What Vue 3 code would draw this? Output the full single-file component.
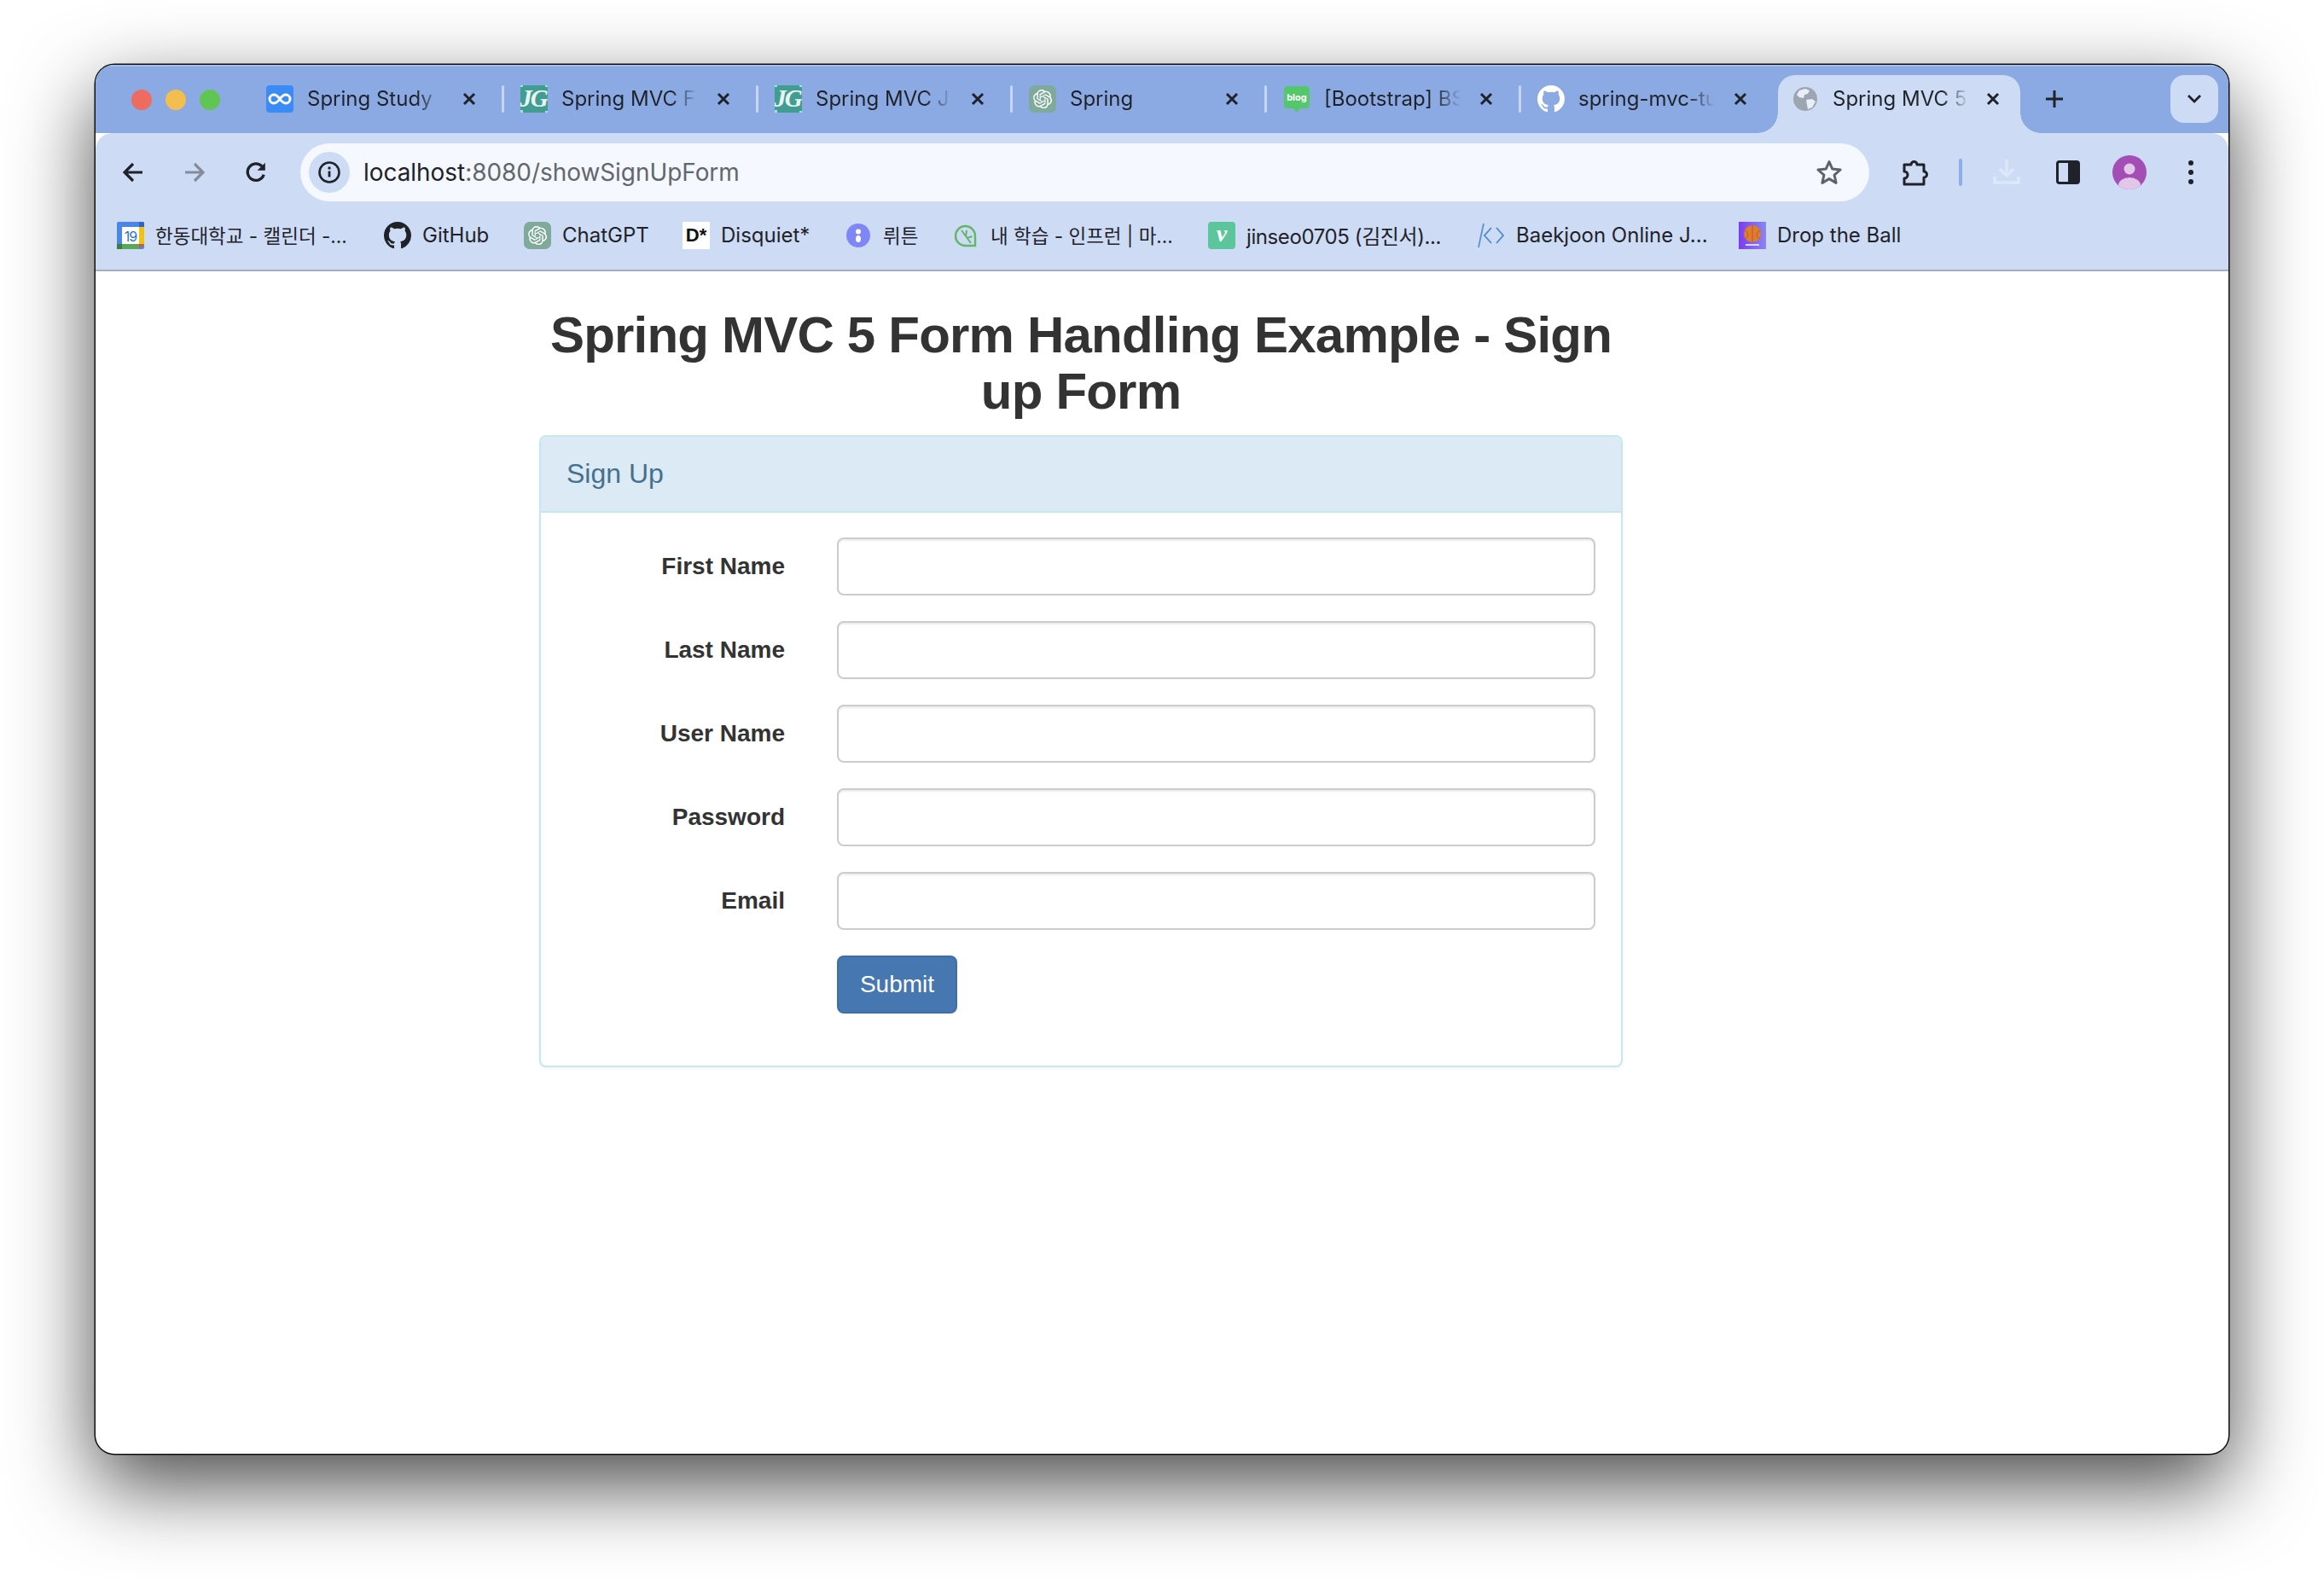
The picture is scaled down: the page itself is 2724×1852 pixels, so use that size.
<template>
  <div class="desktop">
    <div class="window">
      <div class="tabstrip">
        <div class="lights">
          <span class="light red"></span>
          <span class="light yellow"></span>
          <span class="light green"></span>
        </div>
        <div class="tabs">
          <template v-for="(tab, i) in tabs" :key="tab.title">
            <div class="tab">
              <span class="favicon">
                <svg v-if="tab.icon === 'inf'" viewBox="0 0 32 32" width="32" height="32">
                  <rect width="32" height="32" rx="4" fill="#3b8bf7" />
                  <path d="M16 16c-2.500-3.500-4.500-5-7-5a5 5 0 0 0 0 10c2.500 0 4.500-1.500 7-5s4.500-5 7-5a5 5 0 0 1 0 10c-2.500 0-4.500-1.500-7-5z" fill="none" stroke="#fff" stroke-width="3" />
                </svg>
                <svg v-else-if="tab.icon === 'jg'" viewBox="0 0 32 32" width="32" height="32">
                  <rect width="32" height="32" fill="#429c92" />
                  <path d="M0 0h3v2H0zM29 0h3v2h-3zM0 29h3v3H0zM29 30h3v2h-3z" fill="#9fe3e0" />
                  <text x="15" y="25" text-anchor="middle" class="jg-text">JG</text>
                </svg>
                <svg v-else-if="tab.icon === 'gpt'" viewBox="0 0 32 32" width="32" height="32">
                  <rect width="32" height="32" rx="7" fill="#7fa99b" />
                  <g transform="translate(5 5) scale(.92)"><path :d="gptPath" fill="#fff" /></g>
                </svg>
                <svg v-else-if="tab.icon === 'blog'" viewBox="0 0 32 32" width="32" height="32">
                  <path d="M5 1h22a4 4 0 0 1 4 4v18a4 4 0 0 1-4 4h-7l-4 5-4-5H5a4 4 0 0 1-4-4V5a4 4 0 0 1 4-4z" fill="#55c76b" />
                  <text x="16" y="18" text-anchor="middle" class="blog-text">blog</text>
                </svg>
                <svg v-else-if="tab.icon === 'gh'" viewBox="0 0 16 16" width="32" height="32">
                  <path :d="githubPath" fill="#fff" />
                </svg>
              </span>
              <span class="tab-title">{{ tab.title }}</span>
              <svg class="tab-close" viewBox="0 0 16 16" width="16" height="16">
                <path d="M2 2l12 12M14 2L2 14" stroke="#1f2329" stroke-width="3" />
              </svg>
            </div>
            <span v-if="i < tabs.length - 1" class="tab-sep"></span>
          </template>
          <div class="tab active">
            <span class="favicon">
              <svg viewBox="0 0 32 32" width="32" height="32">
                <circle cx="16" cy="16" r="14" fill="#9ca5b1" />
                <path d="M9 6l7-2 5 2-2 4-4 1-1 4-5-1-3-3zM17 17l7-1 4 3-4 7-5 2-1-5z" fill="#e9eef8" />
              </svg>
            </span>
            <span class="tab-title">Spring MVC 5</span>
            <svg class="tab-close" viewBox="0 0 16 16" width="16" height="16">
              <path d="M2 2l12 12M14 2L2 14" stroke="#1f2329" stroke-width="3" />
            </svg>
          </div>
        </div>
        <svg class="new-tab" viewBox="0 0 20 20" width="20" height="20">
          <path d="M10 0v20M0 10h20" stroke="#1f2329" stroke-width="3" />
        </svg>
        <div class="tab-search">
          <svg viewBox="0 0 16 10" width="16" height="10">
            <path d="M1 1l7 7 7-7" fill="none" stroke="#1f2329" stroke-width="2.800" />
          </svg>
        </div>
      </div>

      <div class="toolbar">
        <div class="nav-row">
          <span class="tool-btn">
            <svg viewBox="0 0 24 24" width="24" height="24">
              <path d="M23 12H3M12 2L2 12l10 10" fill="none" stroke="#1f2329" stroke-width="3.200" />
            </svg>
          </span>
          <span class="tool-btn">
            <svg viewBox="0 0 24 24" width="24" height="24">
              <path d="M1 12h20M12 2l10 10-10 10" fill="none" stroke="#858c99" stroke-width="3.200" />
            </svg>
          </span>
          <span class="tool-btn">
            <svg viewBox="0 0 24 24" width="26" height="26">
              <path d="M20.500 14.500A9 9 0 1 1 18.500 5.500" fill="none" stroke="#1f2329" stroke-width="3" />
              <path d="M22 1.500V10h-8.500z" fill="#1f2329" />
            </svg>
          </span>
          <div class="omnibox">
            <span class="site-info">
              <svg viewBox="0 0 26 26" width="26" height="26">
                <circle cx="13" cy="13" r="11.500" fill="none" stroke="#1f2329" stroke-width="2.600" />
                <path d="M13 11.500v7" stroke="#1f2329" stroke-width="2.800" />
                <circle cx="13" cy="8" r="1.700" fill="#1f2329" />
              </svg>
            </span>
            <span class="url"><span class="host">localhost</span>:8080/showSignUpForm</span>
            <svg viewBox="0 0 32 32" width="32" height="32">
              <path d="M16 3.500l3.800 8.600 9.300.9-7 6.200 2 9.200-8.100-4.800-8.100 4.800 2-9.200-7-6.200 9.300-.9z" fill="none" stroke="#5f6368" stroke-width="3" stroke-linejoin="round" />
            </svg>
          </div>
          <span class="tool-btn">
            <svg class="ext-icon" viewBox="0 0 32 32" width="32" height="32">
              <path d="M2 7h8a3.500 3.500 0 0 1 7 0h8v8a3.500 3.500 0 0 1 0 7v8H2v-7a4 4 0 0 0 0-8z" fill="none" stroke="#1f2329" stroke-width="3" stroke-linejoin="round" />
            </svg>
          </span>
          <span class="tool-sep"><i></i></span>
          <span class="tool-btn">
            <svg viewBox="0 0 32 32" width="32" height="32">
              <path d="M16 1v18M8 12l8 8 8-8M2 21v7h28v-7" fill="none" stroke="#dde7f9" stroke-width="3.500" />
            </svg>
          </span>
          <span class="tool-btn">
            <svg viewBox="0 0 28 28" width="28" height="28">
              <rect x="1.500" y="1.500" width="25" height="25" rx="2.500" fill="none" stroke="#1f2329" stroke-width="3" />
              <rect x="14" y="1.500" width="12.500" height="25" fill="#1f2329" />
            </svg>
          </span>
          <span class="tool-btn">
            <svg viewBox="0 0 40 40" width="40" height="40">
              <clipPath id="avatar-clip"><circle cx="20" cy="20" r="20" /></clipPath>
              <g clip-path="url(#avatar-clip)">
                <rect width="40" height="40" fill="#a24eb4" />
                <circle cx="20" cy="16" r="6.500" fill="#e3c7ea" />
                <ellipse cx="20" cy="35" rx="13" ry="9" fill="#e3c7ea" />
              </g>
            </svg>
          </span>
          <span class="tool-btn">
            <svg viewBox="0 0 8 32" width="8" height="32">
              <circle cx="4" cy="5" r="3" fill="#1f2329" />
              <circle cx="4" cy="16" r="3" fill="#1f2329" />
              <circle cx="4" cy="27" r="3" fill="#1f2329" />
            </svg>
          </span>
        </div>

        <div class="bookmarks">
          <div v-for="b in bookmarks" :key="b.label" class="bookmark" :style="{ width: b.width }">
            <span class="favicon">
              <svg v-if="b.icon === 'cal'" viewBox="0 0 32 32" width="32" height="32">
                <rect width="32" height="32" rx="2" fill="#4a86e8" />
                <path d="M26 0h4a2 2 0 0 1 2 2v4h-6z" fill="#2f66c4" />
                <rect x="26" y="6" width="6" height="20" fill="#f4c20d" />
                <rect y="26" width="26" height="6" fill="#57a85c" />
                <rect y="26" width="6" height="6" fill="#3a7d44" />
                <path d="M26 26h6l-6 6z" fill="#e0533d" />
                <rect x="6" y="6" width="20" height="20" fill="#fff" />
                <text x="16" y="23" text-anchor="middle" class="cal-text">19</text>
              </svg>
              <svg v-else-if="b.icon === 'gh'" viewBox="0 0 16 16" width="32" height="32">
                <path :d="githubPath" fill="#1f2329" />
              </svg>
              <svg v-else-if="b.icon === 'gpt'" viewBox="0 0 32 32" width="32" height="32">
                <rect width="32" height="32" rx="7" fill="#7fa99b" />
                <g transform="translate(5 5) scale(.92)"><path :d="gptPath" fill="#fff" /></g>
              </svg>
              <span v-else-if="b.icon === 'disquiet'" class="disquiet">D*</span>
              <svg v-else-if="b.icon === 'wrtn'" viewBox="0 0 32 32" width="32" height="32">
                <circle cx="16" cy="16" r="14" fill="#7f87f6" />
                <circle cx="16" cy="11.500" r="3" fill="#fff" />
                <ellipse cx="16" cy="20" rx="3" ry="4" fill="#fff" />
              </svg>
              <svg v-else-if="b.icon === 'inflearn'" viewBox="0 0 32 32" width="32" height="32">
                <path d="M27 28H16A11.500 11.500 0 1 1 27 16.500z" fill="none" stroke="#62b868" stroke-width="2.400" />
                <path d="M11 10l11 15M16 17l1-7M17.500 19l6-2" fill="none" stroke="#62b868" stroke-width="2" />
              </svg>
              <span v-else-if="b.icon === 'velog'" class="velog">v</span>
              <svg v-else-if="b.icon === 'boj'" viewBox="0 0 32 32" width="32" height="32">
                <path d="M1 30L7 2" fill="none" stroke="#5b93d6" stroke-width="1.800" />
                <path d="M16 7l-8 9 8 9M22 7l8 9-8 9" fill="none" stroke="#4a8ad0" stroke-width="1.800" />
              </svg>
              <svg v-else-if="b.icon === 'ball'" viewBox="0 0 32 32" width="32" height="32">
                <defs>
                  <linearGradient id="ball-bg" x1="0" y1="0" x2="1" y2="0">
                    <stop offset="0" stop-color="#7a3cf0" />
                    <stop offset="1" stop-color="#8a86f0" />
                  </linearGradient>
                </defs>
                <rect width="32" height="32" fill="url(#ball-bg)" />
                <circle cx="16" cy="14" r="10" fill="#e07b32" />
                <path d="M16 4v20M7 10c5 2 5 8 0 10M25 10c-5 2-5 8 0 10" fill="none" stroke="#a9541e" stroke-width=".8" />
                <rect x="8" y="26" width="16" height="2" fill="#ded6f8" />
              </svg>
            </span>
            <span class="bookmark-label" :class="b.cls">{{ b.label }}</span>
          </div>
        </div>
      </div>

      <main class="page">
        <h2 class="heading">Spring MVC 5 Form Handling Example - Sign up Form</h2>
        <section class="panel">
          <div class="panel-heading">Sign Up</div>
          <form class="panel-body" @submit.prevent>
            <div v-for="f in fields" :key="f" class="form-row">
              <label class="form-label">{{ f }}</label>
              <input class="form-input" type="text" />
            </div>
            <div class="form-row">
              <span></span>
              <div><button class="submit" type="submit">Submit</button></div>
            </div>
          </form>
        </section>
      </main>
    </div>
  </div>
</template>

<script setup>
const tabs = [
  { title: 'Spring Study', icon: 'inf' },
  { title: 'Spring MVC F', icon: 'jg' },
  { title: 'Spring MVC J', icon: 'jg' },
  { title: 'Spring', icon: 'gpt' },
  { title: '[Bootstrap] BS', icon: 'blog' },
  { title: 'spring-mvc-tu', icon: 'gh' }
]

const bookmarks = [
  { label: '한동대학교 - 캘린더 -...', icon: 'cal', width: '313px', cls: 'ko' },
  { label: 'GitHub', icon: 'gh', width: '164px' },
  { label: 'ChatGPT', icon: 'gpt', width: '186px' },
  { label: 'Disquiet*', icon: 'disquiet', width: '190px' },
  { label: '뤼튼', icon: 'wrtn', width: '126px', cls: 'ko' },
  { label: '내 학습 - 인프런 | 마...', icon: 'inflearn', width: '300px', cls: 'ko' },
  { label: 'jinseo0705 (김진서)...', icon: 'velog', width: '316px', cls: 'mixed' },
  { label: 'Baekjoon Online J...', icon: 'boj', width: '306px' },
  { label: 'Drop the Ball', icon: 'ball', width: '200px' }
]

const fields = ['First Name', 'Last Name', 'User Name', 'Password', 'Email']

const githubPath = 'M8 0C3.58 0 0 3.58 0 8c0 3.54 2.29 6.53 5.47 7.59.4.07.55-.17.55-.38 0-.19-.01-.82-.01-1.49-2.01.37-2.53-.49-2.69-.94-.09-.23-.48-.94-.82-1.13-.28-.15-.68-.52-.01-.53.63-.01 1.08.58 1.23.82.72 1.21 1.87.87 2.33.66.07-.52.28-.87.51-1.07-1.78-.2-3.64-.89-3.64-3.95 0-.87.31-1.59.82-2.15-.08-.2-.36-1.02.08-2.12 0 0 .67-.21 2.2.82.64-.18 1.32-.27 2-.27.68 0 1.36.09 2 .27 1.53-1.04 2.2-.82 2.2-.82.44 1.1.16 1.92.08 2.12.51.56.82 1.27.82 2.15 0 3.07-1.87 3.75-3.65 3.95.29.25.54.73.54 1.48 0 1.07-.01 1.93-.01 2.2 0 .21.15.46.55.38A8.013 8.013 0 0016 8c0-4.42-3.58-8-8-8z'

const gptPath = 'M22.2819 9.8211a5.9847 5.9847 0 0 0-.5157-4.9108 6.0462 6.0462 0 0 0-6.5098-2.9A6.0651 6.0651 0 0 0 4.9807 4.1818a5.9847 5.9847 0 0 0-3.9977 2.9 6.0462 6.0462 0 0 0 .7427 7.0966 5.98 5.98 0 0 0 .511 4.9107 6.051 6.051 0 0 0 6.5146 2.9001A5.9847 5.9847 0 0 0 13.2599 24a6.0557 6.0557 0 0 0 5.7718-4.2058 5.9894 5.9894 0 0 0 3.9977-2.9001 6.0557 6.0557 0 0 0-.7475-7.0729zm-9.022 12.6081a4.4755 4.4755 0 0 1-2.8764-1.0408l.1419-.0804 4.7783-2.7582a.7948.7948 0 0 0 .3927-.6813v-6.7369l2.02 1.1686a.071.071 0 0 1 .038.052v5.5826a4.504 4.504 0 0 1-4.4945 4.4944zm-9.6607-4.1254a4.4708 4.4708 0 0 1-.5346-3.0137l.142.0852 4.783 2.7582a.7712.7712 0 0 0 .7806 0l5.8428-3.3685v2.3324a.0804.0804 0 0 1-.0332.0615L9.74 19.9502a4.4992 4.4992 0 0 1-6.1408-1.6464zM2.3408 7.8956a4.485 4.485 0 0 1 2.3655-1.9728V11.6a.7664.7664 0 0 0 .3879.6765l5.8144 3.3543-2.0201 1.1685a.0757.0757 0 0 1-.071 0l-4.8303-2.7865A4.504 4.504 0 0 1 2.3408 7.872zm16.5963 3.8558L13.1038 8.364 15.1192 7.2a.0757.0757 0 0 1 .071 0l4.8303 2.7913a4.4944 4.4944 0 0 1-.6765 8.1042v-5.6772a.79.79 0 0 0-.407-.667zm2.0107-3.0231l-.142-.0852-4.7735-2.7818a.7759.7759 0 0 0-.7854 0L9.409 9.2297V6.8974a.0662.0662 0 0 1 .0284-.0615l4.8303-2.7866a4.4992 4.4992 0 0 1 6.6802 4.66zM8.3065 12.863l-2.02-1.1638a.0804.0804 0 0 1-.038-.0567V6.0742a4.4992 4.4992 0 0 1 7.3757-3.4537l-.142.0805L8.704 5.459a.7948.7948 0 0 0-.3927.6813zm1.0976-2.3654l2.602-1.4998 2.6069 1.4998v2.9994l-2.5974 1.4997-2.6067-1.4997Z'
</script>

<style>
html,
body {
  margin: 0;
  background: #fff;
}
</style>

<style scoped>
.desktop {
  width: 2724px;
  height: 1852px;
  padding: 76px 112px;
  box-sizing: border-box;
  overflow: hidden;
  background: #fff;
}

.window {
  width: 2500px;
  height: 1628px;
  display: flex;
  flex-direction: column;
  background: #fff;
  border-radius: 22px;
  box-shadow: 0 0 0 1.5px #111, 0 36px 96px rgba(0, 0, 0, 0.72);
  overflow: hidden;
  font-family: Inter, "Noto Sans CJK KR", sans-serif;
}

/* 탭 영역 */
.tabstrip {
  height: 80px;
  flex-shrink: 0;
  display: flex;
  background: #8baae4;
  box-shadow: inset 0 2px 0 #a5bdec;
}

.lights {
  display: flex;
  gap: 16px;
  width: 140px;
  padding: 29px 0 0 42px;
  flex-shrink: 0;
}

.light {
  width: 24px;
  height: 24px;
  border-radius: 50%;
}

.red { background: #ee6b60; }
.yellow { background: #f4bd4f; }
.green { background: #61c554; }

.tabs {
  display: flex;
  align-items: flex-start;
  padding-top: 12px;
}

.tab {
  position: relative;
  width: 294px;
  height: 68px;
  padding: 0 0 12px 18px;
  box-sizing: border-box;
  display: flex;
  align-items: center;
}

.tab-sep {
  width: 3px;
  height: 32px;
  margin: 12px 1px 0 0;
  background: #c6d5f2;
  border-radius: 2px;
}

.tab.active {
  width: 284px;
  margin-left: 6px;
  padding-left: 16px;
  background: #cddbf5;
  border-radius: 20px 20px 0 0;
}

.tab.active .tab-close {
  margin-left: 10px;
}

.tab.active::before,
.tab.active::after {
  content: '';
  position: absolute;
  bottom: 0;
  width: 24px;
  height: 24px;
}

.tab.active::before {
  left: -24px;
  background: radial-gradient(circle at 0 0, transparent 23.5px, #cddbf5 24px);
}

.tab.active::after {
  right: -24px;
  background: radial-gradient(circle at 100% 0, transparent 23.5px, #cddbf5 24px);
}

.favicon {
  width: 32px;
  height: 32px;
  flex-shrink: 0;
  display: flex;
}

.tab-title {
  width: 170px;
  margin-left: 16px;
  font-size: 24px;
  line-height: 32px;
  color: #1f2329;
  white-space: nowrap;
  -webkit-mask-image: linear-gradient(to right, #000 128px, transparent 160px);
  mask-image: linear-gradient(to right, #000 128px, transparent 160px);
}

.tab-close {
  margin-left: 12px;
  flex-shrink: 0;
}

.new-tab {
  margin: 30px 0 0 30px;
  flex-shrink: 0;
}

.tab-search {
  width: 56px;
  height: 56px;
  margin: 12px 0 0 126px;
  display: flex;
  align-items: center;
  justify-content: center;
  background: #cddbf5;
  border-radius: 16px;
}

.jg-text {
  font: italic 700 29px "Liberation Serif", serif;
  letter-spacing: -2px;
  fill: #e8f6f3;
}

.blog-text {
  font: 700 11px Inter, sans-serif;
  fill: #fff;
}

.cal-text {
  font: 400 16px Inter, sans-serif;
  letter-spacing: -1px;
  fill: #2a6fd6;
}

/* 주소창 */
.toolbar {
  height: 160px;
  flex-shrink: 0;
  background: #cddbf5;
  border-radius: 20px 20px 0 0;
  border-bottom: 2px solid #a3aec2;
}

.nav-row {
  display: flex;
  align-items: center;
  padding: 12px 0 0 8px;
}

.tool-btn {
  width: 72px;
  height: 68px;
  flex-shrink: 0;
  display: flex;
  align-items: center;
  justify-content: center;
}

.ext-icon {
  margin-left: 4px;
}

.omnibox {
  width: 1839px;
  height: 68px;
  margin: 0 17px 0 16px;
  padding: 0 31px 0 10px;
  box-sizing: border-box;
  display: flex;
  align-items: center;
  flex-shrink: 0;
  background: #f5f8fe;
  border-radius: 34px;
}

.site-info {
  width: 48px;
  height: 48px;
  flex-shrink: 0;
  display: flex;
  align-items: center;
  justify-content: center;
  background: #cddbf5;
  border-radius: 50%;
}

.url {
  flex: 1;
  margin-left: 16px;
  font-size: 27.9px;
  color: #62666d;
}

.host {
  color: #1f2329;
}

.tool-sep {
  width: 36px;
  display: flex;
  justify-content: center;
  flex-shrink: 0;
}

.tool-sep i {
  width: 4px;
  height: 32px;
  border-radius: 2px;
  background: #8caeea;
}

.bookmarks {
  display: flex;
  align-items: center;
  height: 64px;
  margin-top: 8px;
  padding-left: 25px;
}

.bookmark {
  display: flex;
  align-items: center;
  gap: 13px;
  flex-shrink: 0;
}

.bookmark-label {
  margin-top: -2px;
  font-size: 24px;
  color: #1f2329;
  white-space: nowrap;
}

.bookmark-label.ko {
  font-size: 22.5px;
}

.bookmark-label.mixed {
  letter-spacing: -0.4px;
}

.disquiet {
  width: 32px;
  height: 32px;
  background: #fff;
  color: #111;
  font: 700 22px/32px "Liberation Sans", sans-serif;
  text-align: center;
}

.velog {
  width: 32px;
  height: 32px;
  background: #5cc59b;
  border-radius: 4px;
  color: #fff;
  font: italic 700 28px/28px "Liberation Serif", serif;
  text-align: center;
}

/* 페이지 */
.page {
  flex: 1;
  padding-left: 520px;
  font-family: "Liberation Sans", Arial, sans-serif;
}

.heading {
  width: 1270px;
  margin: 42px 0 18px;
  font-size: 60px;
  font-weight: 700;
  line-height: 66px;
  letter-spacing: -0.8px;
  color: #333;
  text-align: center;
}

.panel {
  width: 1270px;
  box-sizing: border-box;
  border: 2px solid #c5e8ef;
  border-radius: 8px;
  box-shadow: 0 2px 4px rgba(0, 0, 0, 0.05);
}

.panel-heading {
  height: 87px;
  padding: 0 30px;
  display: flex;
  align-items: center;
  font-size: 32px;
  color: #45708f;
  background: #dceaf6;
  border-bottom: 2px solid #c5e8ef;
  border-radius: 6px 6px 0 0;
}

.panel-body {
  display: flex;
  flex-direction: column;
  gap: 30px;
  padding: 29px 30px 61px;
}

.form-row {
  display: grid;
  grid-template-columns: 256px 889px;
  column-gap: 61px;
  align-items: center;
}

.form-label {
  font-size: 28px;
  font-weight: 700;
  color: #333;
  text-align: right;
}

.form-input {
  height: 68px;
  box-sizing: border-box;
  border: 2px solid #ccc;
  border-radius: 8px;
  background: #fff;
  box-shadow: inset 0 2px 2px rgba(0, 0, 0, 0.075);
  outline: none;
}

.submit {
  width: 141px;
  height: 68px;
  display: block;
  border: 2px solid #3f6fa6;
  border-radius: 8px;
  background: #4677b0;
  color: #fff;
  font: 400 28px "Liberation Sans", Arial, sans-serif;
  padding: 0;
}
</style>
